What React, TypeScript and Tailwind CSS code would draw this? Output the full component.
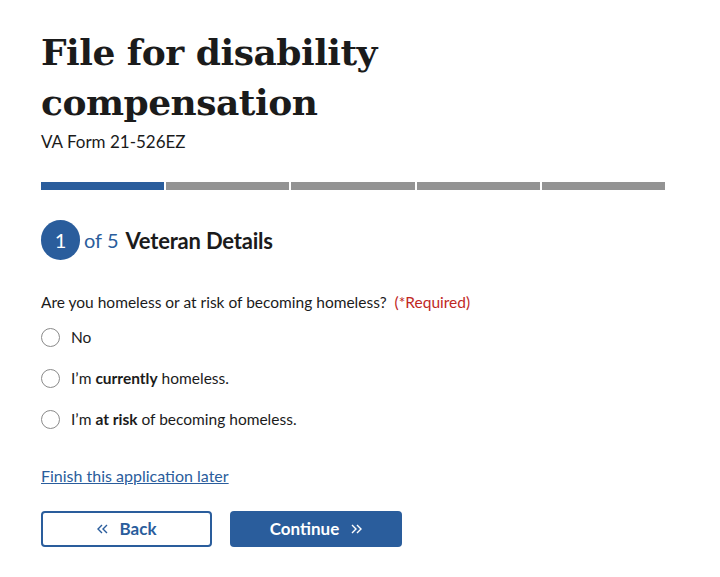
function Chevrons({ dir }: { dir: "left" | "right" }) {
  const d =
    dir === "left"
      ? "M5 1 L1 5 L5 9 M10 1 L6 5 L10 9"
      : "M1 1 L5 5 L1 9 M6 1 L10 5 L6 9";
  return (
    <svg width="11" height="10" viewBox="0 0 11 10" fill="none" stroke="currentColor" strokeWidth="1.4">
      <path d={d} />
    </svg>
  );
}

export default function App() {
  const options = [
    <>No</>,
    <>
      I’m <b>currently</b> homeless.
    </>,
    <>
      I’m <b>at risk</b> of becoming homeless.
    </>,
  ];

  return (
    <div className="min-h-[577px] bg-white px-[41px] pt-[27px] text-[#1b1b1b] font-['Lato','Open_Sans',sans-serif]">
      {/* TITLE */}
      <h1 className="font-['DejaVu_Serif',serif] text-[36px] font-bold leading-[50px] tracking-[-0.5px]">
        File for disability
        <br />
        compensation
      </h1>
      <p className="text-[17px] leading-6 mt-[3px]">VA Form 21-526EZ</p>

      {/* PROGRESS */}
      <div className="flex gap-[2px] w-[624px] mt-[28px]">
        <div className="h-2 flex-1 bg-[#2a5d9c]" />
        <div className="h-2 flex-1 bg-[#939393]" />
        <div className="h-2 flex-1 bg-[#939393]" />
        <div className="h-2 flex-1 bg-[#939393]" />
        <div className="h-2 flex-1 bg-[#939393]" />
      </div>

      {/* STEP */}
      <div className="flex items-center mt-[30px]">
        <div className="w-[39px] h-[40px] rounded-full bg-[#2a5d9c] text-white flex items-center justify-center text-[20px]">
          1
        </div>
        <span className="ml-[4px] text-[20px] text-[#2a5d9c]">of 5</span>
        <span className="ml-[7px] text-[22px] font-bold tracking-[-0.2px]">Veteran Details</span>
      </div>

      {/* QUESTION */}
      <p className="text-[15.5px] mt-[30px] leading-6">
        Are you homeless or at risk of becoming homeless?{" "}
        <span className="text-[#c0281f] ml-1">(*Required)</span>
      </p>

      <div className="flex flex-col gap-[17px] mt-[11px]">
        {options.map((label, i) => (
          <label key={i} className="flex items-center text-[15.5px] leading-6">
            <span className="w-[19px] h-[19px] rounded-full border-[1.5px] border-[#8a8a8a] bg-white" />
            <span className="ml-[11px]">{label}</span>
          </label>
        ))}
      </div>

      <a href="#" className="block mt-[33px] text-[16px] text-[#2a5d9c] underline leading-6">
        Finish this application later
      </a>

      {/* BUTTONS */}
      <div className="flex gap-[18px] mt-[23px]">
        <button className="w-[171px] h-[36px] rounded-[4px] border-2 border-[#2a5d9c] text-[#2a5d9c] font-bold text-[17px] flex items-center justify-center gap-[12px]">
          <Chevrons dir="left" />
          Back
        </button>
        <button className="w-[172px] h-[36px] rounded-[4px] bg-[#2a5d9c] text-white font-bold text-[17px] flex items-center justify-center gap-[12px]">
          Continue
          <Chevrons dir="right" />
        </button>
      </div>
    </div>
  );
}
